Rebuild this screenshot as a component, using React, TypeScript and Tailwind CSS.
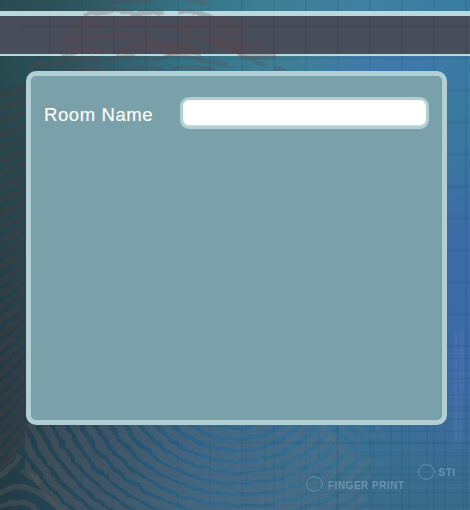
const steps = (n: number) => Array.from({ length: n }, (_, i) => i);

// Swirling ridges of the thumb print, beside and below the form
function Ridges() {
  return (
    <g fill="none" filter="url(#rough)">
      <g stroke="#473d3b" strokeOpacity=".42" strokeWidth="6.5" clipPath="url(#sideArea)">
        {steps(36).map((i) => {
          const y = 92 + i * 13;
          const rise = 6 + i * 0.9;
          return <path key={i} d={`M-8 ${y + rise * 0.6}Q14 ${y} 34 ${y - rise}`} />;
        })}
      </g>
      <g stroke="url(#ridgeFade)" strokeWidth="8" clipPath="url(#lowerArea)">
        {steps(18).map((i) => {
          const rx = 16 + i * 14.2;
          const ry = 16 + i * 11;
          return <path key={i} d={`M${235 - rx} 385A${rx} ${ry} 0 0 0 ${235 + rx} 385`} transform={`rotate(${i * 0.7} 235 385)`} />;
        })}
      </g>
      <g stroke="url(#ridgeFade)" strokeWidth="5.5">
        <path d="M22 470Q30 477 41 483M20 455Q12 468-6 480M-6 497Q12 484 24 487Q48 494 66 515M-6 510Q10 499 27 503L42 515" />
        <path d="M322 425Q334 439 344 453M337 421Q347 436 359 444M351 421Q362 434 377 438M376 425L384 437" strokeWidth="4" />
      </g>
    </g>
  );
}

function UpperRidges() {
  return (
    <g fill="none" stroke="#6a4346" strokeOpacity=".26" strokeWidth="6.5" filter="url(#rough)">
      <path d="M107 3Q130-2 151 3M187 0L209 3" strokeWidth="4" />
      <path d="M84 15Q112 7 134 14Q149 9 164 14M178 11Q204 12 218 20L249 28" strokeWidth="5" />
      <path d="M67 27Q86 21 105 25M113 24Q144 20 169 26L193 33M181 22Q211 23 242 36" />
      <path d="M56 44Q70 35 91 38M91 40Q118 29 144 39T191 43M201 39Q223 38 237 45L260 46" />
      <path d="M61 55Q82 46 105 51M114 53Q142 40 171 53Q188 47 202 54M212 44Q232 48 248 55L276 57" />
      <path d="M28 69Q39 61 51 65M53 65Q77 53 101 62M108 61Q127 52 149 60M155 61Q177 50 200 60L228 65M238 55L266 65" strokeWidth="4.5" />
      <path d="M61 72Q85 65 108 70M115 72Q138 65 163 70M170 70Q190 64 214 70M274 68L285 71" strokeWidth="4" />
    </g>
  );
}

function Backdrop() {
  return (
    <svg className="absolute inset-0" width="470" height="510" viewBox="0 0 470 510">
      <defs>
        <linearGradient id="base">
          <stop offset="0" stopColor="#294b50" />
          <stop offset=".14" stopColor="#2c535b" />
          <stop offset=".4" stopColor="#367588" />
          <stop offset=".58" stopColor="#3f7f93" />
          <stop offset=".8" stopColor="#4080a2" />
          <stop offset="1" stopColor="#397ca0" />
        </linearGradient>
        <linearGradient id="low">
          <stop offset="0" stopColor="#213b45" />
          <stop offset=".2" stopColor="#264b62" />
          <stop offset=".45" stopColor="#2b678f" />
          <stop offset=".7" stopColor="#37739b" />
          <stop offset="1" stopColor="#3b7099" />
        </linearGradient>
        <linearGradient id="down" x2="0" y2="1">
          <stop offset=".1" stopColor="#fff" stopOpacity="0" />
          <stop offset=".75" stopColor="#fff" />
        </linearGradient>
        <mask id="lowMask">
          <rect width="470" height="510" fill="url(#down)" />
        </mask>
        <radialGradient id="blue" gradientUnits="userSpaceOnUse" cx="0" cy="0" r="1" gradientTransform="translate(462 310) scale(90 190)">
          <stop stopColor="#3d69a8" />
          <stop offset=".4" stopColor="#3c6aa6" stopOpacity=".9" />
          <stop offset="1" stopColor="#3d6eaa" stopOpacity="0" />
        </radialGradient>
        <radialGradient id="topBlue" gradientUnits="userSpaceOnUse" cx="0" cy="0" r="1" gradientTransform="translate(395 70) scale(95 38)">
          <stop stopColor="#3f76b0" stopOpacity=".8" />
          <stop offset="1" stopColor="#3f76b0" stopOpacity="0" />
        </radialGradient>
        <linearGradient id="foot" x2="0" y2="1">
          <stop offset=".78" stopColor="#3b6b86" stopOpacity="0" />
          <stop offset="1" stopColor="#3b6b86" stopOpacity=".85" />
        </linearGradient>
        <linearGradient id="footFade">
          <stop offset=".25" stopColor="#fff" stopOpacity="0" />
          <stop offset=".75" stopColor="#fff" />
        </linearGradient>
        <mask id="footMask">
          <rect width="470" height="510" fill="url(#footFade)" />
        </mask>
        <linearGradient id="ridgeFade" gradientUnits="userSpaceOnUse" x1="0" x2="380" y1="0" y2="0">
          <stop stopColor="#545251" stopOpacity=".5" />
          <stop offset=".5" stopColor="#626873" stopOpacity=".45" />
          <stop offset="1" stopColor="#68737f" stopOpacity=".25" />
        </linearGradient>
        <clipPath id="sideArea">
          <path d="M0 80H30V426L22 450L0 474Z" />
        </clipPath>
        <clipPath id="lowerArea">
          <path d="M25 424H325L350 450L381 462L366 485L370 515H60L26 470Z" />
        </clipPath>
        <filter id="rough" x="-5%" y="-5%" width="110%" height="110%" colorInterpolationFilters="sRGB">
          <feTurbulence type="fractalNoise" baseFrequency=".09" numOctaves="2" seed="7" />
          <feDisplacementMap in="SourceGraphic" scale="5" xChannelSelector="R" yChannelSelector="G" />
        </filter>
      </defs>
      <rect width="470" height="510" fill="url(#base)" />
      <rect width="470" height="510" fill="url(#low)" mask="url(#lowMask)" />
      <rect width="470" height="510" fill="url(#blue)" />
      <rect width="470" height="510" fill="url(#topBlue)" />
      <rect width="470" height="510" fill="url(#foot)" mask="url(#footMask)" />
      <g fill="#8797ce" fillOpacity=".12">
        <rect x="454" y="332" width="4" height="113" />
        <rect x="459" y="332" width="5" height="113" />
      </g>
      <g stroke="#203f60" strokeOpacity=".12" strokeWidth="2">
        {steps(14).map((i) => (
          <path key={i} d={`M${50 + i * 32} 0V510`} />
        ))}
        {steps(16).map((i) => (
          <path key={i} d={`M19 ${26.5 + i * 32}H470`} />
        ))}
      </g>
      <g stroke="#1e486a" strokeOpacity=".13" strokeWidth="1.5">
        {steps(14).map((i) => (
          <path key={i} d={`M240 ${346 + i * 12.2}H470`} />
        ))}
        {steps(13).map((i) => (
          <path key={i} d={`M${247 + i * 18} 390V510`} />
        ))}
      </g>
      <Ridges />
      <g fill="none" stroke="#7ca4ba" strokeOpacity=".6">
        <ellipse cx="314.3" cy="484" rx="8" ry="7.3" />
        <ellipse cx="426.3" cy="472" rx="8" ry="7.3" />
      </g>
      <g className="font-['Liberation_Sans',sans-serif] text-[10px] font-bold tracking-[.5px]" fill="#85a8bd" fillOpacity=".65">
        <text x="328" y="488.6">FINGER PRINT</text>
        <text x="438.5" y="476">STI</text>
      </g>
    </svg>
  );
}

export default function App() {
  return (
    <main className="relative h-[510px] w-[470px] overflow-hidden font-['Liberation_Sans',sans-serif]">
      <Backdrop />
      <div className="relative flex flex-col pt-[11px]">
        <header className="h-[45px] border-t-[5px] border-b-2 border-[#b9d9dc] bg-[#484e59]" />
        <svg className="absolute top-0 left-0" width="470" height="75" viewBox="0 0 470 75">
          <g stroke="#333c4c" strokeOpacity=".22" strokeWidth="2">
            {steps(14).map((i) => (
              <path key={i} d={`M${50 + i * 32} 16V54`} />
            ))}
            <path d="M19 26.5H470" />
          </g>
          <UpperRidges />
        </svg>
        <section className="relative mt-[15px] ml-[26px] h-[354px] w-[421px] rounded-[10px] border-[5px] border-[#b1d0d5] bg-[#7aa1a9] px-[13px] pt-[21px] shadow-[inset_0_0_1px_#5f8f97]">
          <label className="flex items-center">
            <span className="w-[136px] pt-[3px] text-[18.5px] leading-6 tracking-[.6px] text-white [-webkit-text-stroke:.15px_white]">Room Name</span>
            <input
              type="text"
              className="h-8 w-[249px] rounded-[9px] border-[3px] border-[#b1d0d5] bg-white px-2 text-base text-[#484e59] shadow-[inset_0_-1px_1px_#c5dcdf] outline-none"
            />
          </label>
        </section>
      </div>
    </main>
  );
}
